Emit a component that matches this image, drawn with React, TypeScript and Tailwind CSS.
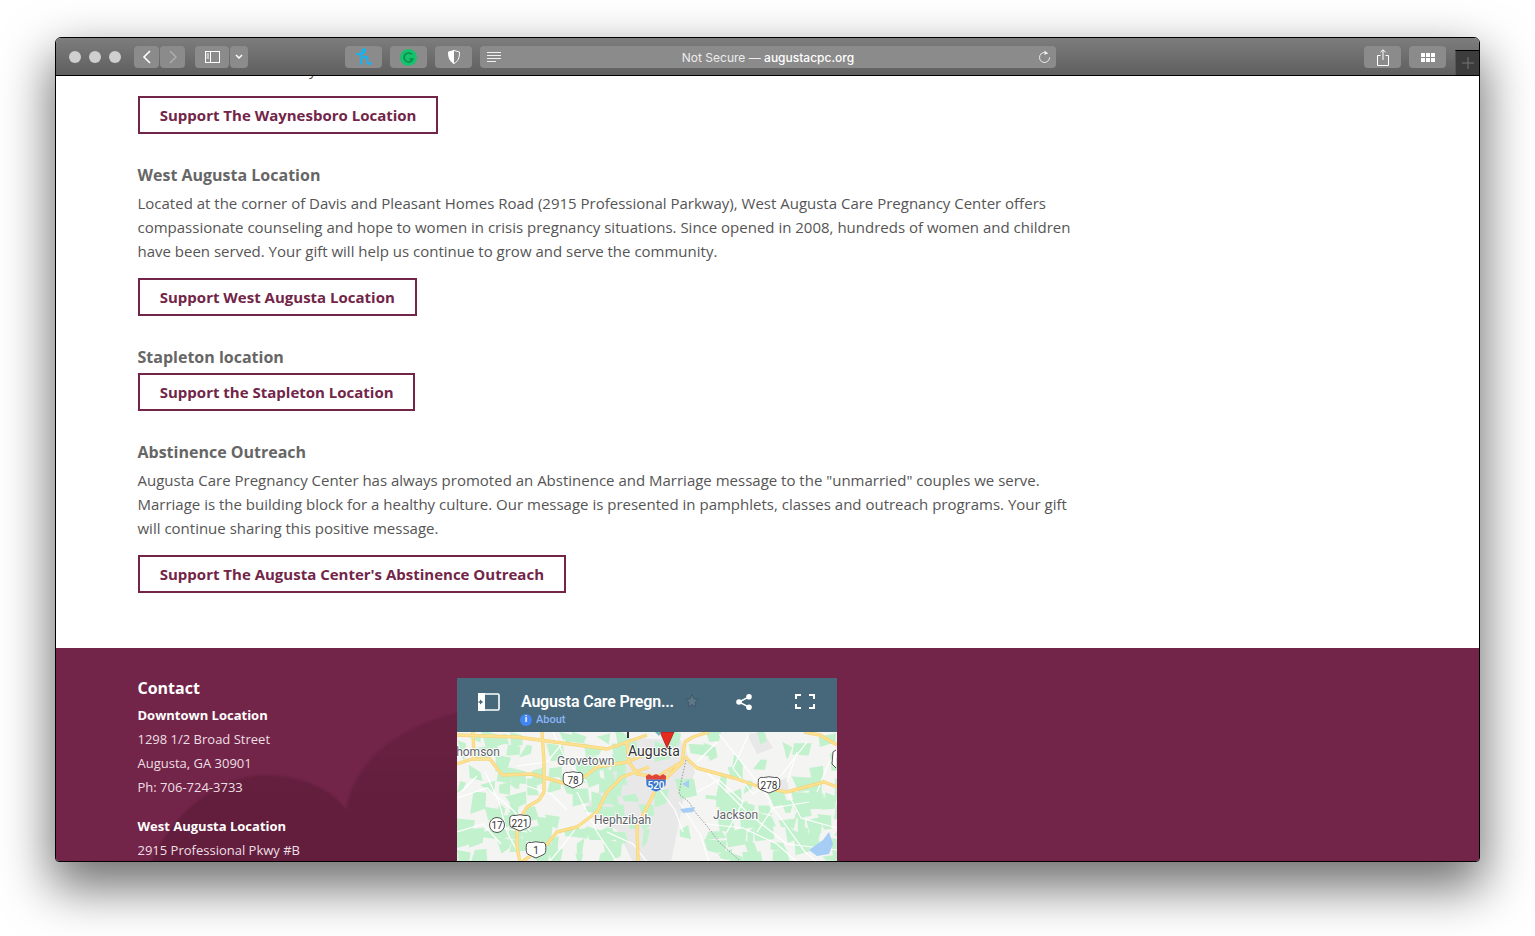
// terrain fragments for the map: fixed pseudo-random so every render is the same
function rnd(a: number, b: number) {
  const s = Math.sin(a * 12.9898 + b * 78.233) * 43758.5453;
  return s - Math.floor(s);
}

function isGreen(x: number, y: number) {
  const r = rnd(x, y);
  if (x > 165 && x < 235) return r > 0.8; // town, mostly grey
  if (x > 240 && y < 40) return r > 0.68; // upper right is paler
  return r > 0.44;
}

const GREEN: string[] = [];
for (let x = 0; x < 380; x += 13) {
  for (let y = 0; y < 130; y += 12) {
    if (!isGreen(x, y)) continue;
    const j = (k: number) => rnd(x + k, y - k) * 9;
    const w = 9 + j(1);
    const h = 8 + j(2);
    GREEN.push(`${x + j(3) - 4},${y + j(4) - 4} ${x + w},${y + j(5) - 4} ${x + w + j(6) - 4},${y + h} ${x + j(7) - 3},${y + h + j(8) - 3}`);
  }
}

const GREY = ["172,6 224,8 238,40 226,70 214,130 176,130 160,98 128,76 150,50", "290,2 306,0 316,16 300,22", "318,50 330,46 332,60 318,60"];

const WHITE_ROADS = [
  "M28 40 L42 70 L50 100 L66 130", "M0 66 L30 56 L56 78 L74 100", "M96 0 L110 30 L130 50", "M250 40 L292 82 L330 112 L380 118",
  "M222 70 L244 104 L252 130", "M292 2 L276 36 L296 62 L322 46 L350 10", "M262 2 L302 52 L314 70", "M312 70 L348 120 L360 130", "M200 54 L218 78 L226 100",
  "M122 92 L104 116 L92 130", "M70 54 L94 62 L110 78", "M250 92 L286 96 L320 112 L340 130", "M0 100 L26 92 L44 112", "M120 60 L140 100 L160 130",
  "M240 60 L262 48 L286 70 L270 100", "M330 60 L344 86 L380 96", "M340 20 L330 50", "M108 8 L90 30 L60 34", "M20 44 L4 60", "M150 100 L176 112 L190 130",
  "M260 10 L240 30", "M300 100 L316 76 L352 70", "M360 60 L372 30 L380 24", "M70 100 L44 96",
];

const MAJOR_ROADS = "M0 3 L60 5 L150 17 L170 10 L190 3 M85 0 L87 30 L87 60 L82 68 L70 75 L60 92 L60 115 L63 130 M0 32 L15 27 L33 27 L45 43 L75 42 L110 52 L127 45 L140 35 L170 30 L190 22 M65 130 L90 112 L100 100 L120 95 L140 80 L150 60 L165 45 L192 35 M181 130 L180 95 L190 75 L200 55 L226 30 M170 10 L172 30 L180 42 L200 45 L225 30 L228 10 L236 5 L252 0 M228 25 L240 36 L277 46 L303 55 L330 60 L367 50 L380 55 M347 0 L363 3 L380 13 M16 0 L17 26";

function US({ x, y, label, w = 19 }: { x: number; y: number; label: string; w?: number }) {
  const h = w / 2;
  return (
    <g transform={`translate(${x} ${y})`}>
      <path d={`M${-h} -6 Q${-h + 2} -8.5 ${-h / 2} -7.5 Q0 -9 ${h / 2} -7.5 Q${h - 2} -8.5 ${h} -6 Q${h + 1} 2 ${h - 1} 4 Q${h / 2} 6 0 8 Q${-h / 2} 6 ${-h + 1} 4 Q${-h - 1} 2 ${-h} -6 Z`} fill="#fff" stroke="#555" strokeWidth="1" />
      <text x="0" y="3.5" textAnchor="middle" fontSize="10" fill="#333" fontFamily="Roboto, sans-serif">{label}</text>
    </g>
  );
}

function MapArt() {
  return (
    <svg width="380" height="130" viewBox="0 0 380 130" className="block" fontFamily="Roboto, sans-serif">
      <rect width="380" height="130" fill="#f4f4f2" />
      {GREY.map((p) => <polygon key={p} points={p} fill="#e8e8e9" />)}
      {GREEN.map((p) => <polygon key={p} points={p} fill="#c2f1cd" />)}
      {WHITE_ROADS.map((d) => <path key={d} d={d} fill="none" stroke="#fff" strokeWidth="1.2" />)}
      <path d={MAJOR_ROADS} fill="none" stroke="#f6d67c" strokeWidth="3.4" strokeLinejoin="round" />
      <path d={MAJOR_ROADS} fill="none" stroke="#fde293" strokeWidth="1.8" strokeLinejoin="round" />
      <path d="M229 28 L224 50 L222 62 L232 70 L238 80 L250 94 L262 110 L282 128" fill="none" stroke="#9a9a9a" strokeWidth="1" strokeDasharray="1.5 1.5" />
      <path d="M225 52 L232 48 L232 56 Z M223 77 L238 75 L236 80 L226 81 Z" fill="#a6cdf5" />
      <path d="M352 118 L366 108 L372 100 L376 112 L372 122 L360 124 Z" fill="#a6cdf5" />
      <path d="M379 18 L376 20 L375 32 L379 36" fill="#fff" stroke="#555" strokeWidth="1" />
      <g fill="#5f6368" style={{ paintOrder: "stroke" }} stroke="#fff" strokeWidth="2" strokeLinejoin="round" fontSize="12">
        <text x="-8" y="24">Thomson</text>
        <text x="100" y="33">Grovetown</text>
        <text x="137" y="92">Hephzibah</text>
        <text x="256" y="87">Jackson</text>
        <text x="-6" y="128">n</text>
        <text x="171" y="24" fontSize="14" fill="#333">Augusta</text>
      </g>
      <US x={116} y={48} label="78" />
      <US x={312} y={53} label="278" w={21} />
      <US x={63} y={91} label="221" w={20} />
      <circle cx="40" cy="93" r="7.5" fill="#fff" stroke="#555" />
      <text x="40" y="96.5" textAnchor="middle" fontSize="10" fill="#333">17</text>
      <US x={79} y={118} label="1" />
      <path d="M189 47 H209 L209 53 Q206 58 199 60 Q192 58 189 53 Z" fill="#3a76c9" stroke="#fff" strokeWidth="0.6" />
      <path d="M189 44 L192 42 L195 44 L199 42 L203 44 L206 42 L209 44 V47.5 H189 Z" fill="#e0453a" />
      <text x="199" y="57" textAnchor="middle" fontSize="10" fill="#fff" fontWeight="500">520</text>
      <path d="M203 0 H217 L210 16 Z" fill="#e62b1e" stroke="#7a1a12" strokeWidth="0.6" />
      <rect x="170" y="0" width="2" height="6" fill="#333" />
      <path d="M198 0 L202 4 L204 0 Z" fill="#6bb6c2" />
    </svg>
  );
}

function HeaderIcons({ kind }: { kind: "panel" | "share" | "full" }) {
  if (kind === "panel") {
    return (
      <svg className="ml-px" width="22" height="18" viewBox="0 0 22 18">
        <rect x="1" y="1" width="20" height="16" fill="none" stroke="#fff" strokeWidth="1.6" rx="1" />
        <path d="M0 0 H7 V18 H0 Z" fill="#fff" />
        <path d="M2 6.5 L5 9 L2 11.5 Z M0.5 8.2 H3 V9.8 H0.5 Z" fill="#46687a" />
      </svg>
    );
  }
  if (kind === "share") {
    return (
      <svg width="16" height="16" viewBox="0 0 16 16" fill="#fff">
        <circle cx="13" cy="2.8" r="2.8" />
        <circle cx="3" cy="8" r="2.8" />
        <circle cx="13" cy="13.2" r="2.8" />
        <path d="M3 8 L13 2.8 M3 8 L13 13.2" stroke="#fff" strokeWidth="1.5" />
      </svg>
    );
  }
  return (
    <svg width="20" height="15" viewBox="0 0 20 15" fill="none" stroke="#fff" strokeWidth="2">
      <path d="M1 5 V1 H6 M14 1 H19 V5 M19 10 V14 H14 M6 14 H1 V10" />
    </svg>
  );
}

function ToolBtn({ className, children }: { className: string; children?: React.ReactNode }) {
  return <div className={`flex h-[22px] items-center justify-center rounded-[4px] bg-[#8b8b8b] ${className}`}>{children}</div>;
}

function Toolbar() {
  return (
    <div className="flex h-[38px] shrink-0 items-start border-b border-black bg-gradient-to-b from-[#7d7d7d] to-[#5f5f5f] pl-[13px] pt-[8px]">
      <div className="mt-[5px] flex gap-2">
        <div className="h-3 w-3 rounded-full bg-[#cfcfcf]" />
        <div className="h-3 w-3 rounded-full bg-[#cfcfcf]" />
        <div className="h-3 w-3 rounded-full bg-[#cfcfcf]" />
      </div>
      <ToolBtn className="ml-[13px] w-[25px]">
        <svg width="10" height="14" viewBox="0 0 10 14" fill="none" stroke="#fff" strokeWidth="1.6"><path d="M8 1 L2 7 L8 13" /></svg>
      </ToolBtn>
      <ToolBtn className="ml-px w-[25px]">
        <svg width="10" height="14" viewBox="0 0 10 14" fill="none" stroke="#b0b0b0" strokeWidth="1.4"><path d="M2 1 L8 7 L2 13" /></svg>
      </ToolBtn>
      <ToolBtn className="ml-[10px] w-[34px]">
        <svg width="15" height="12" viewBox="0 0 15 12" fill="none" stroke="#fff" strokeWidth="1"><rect x="0.5" y="0.5" width="14" height="11" /><path d="M5.5 0.5 V11.5 M1.5 3 H4 M1.5 5 H4 M1.5 7 H4" /></svg>
      </ToolBtn>
      <ToolBtn className="ml-px w-[18px]">
        <svg width="8" height="6" viewBox="0 0 8 6" fill="none" stroke="#fff" strokeWidth="1.5"><path d="M1 1 L4 4 L7 1" /></svg>
      </ToolBtn>
      <ToolBtn className="ml-[97px] w-[37px]">
        <svg width="16" height="18" viewBox="0 0 16 18" fill="none" stroke="#12b4f2" strokeWidth="2" strokeLinecap="round"><path d="M1 6 C4 7 9 5 9 2.5 C9 0.5 6.5 0.5 6 3.5 L5 16 M5.5 11 C7.5 8 11.5 8 11.5 11 L11.5 14 C11.5 16 13.5 16.5 15 15" /></svg>
      </ToolBtn>
      <ToolBtn className="ml-2 w-[37px]">
        <svg width="17" height="17" viewBox="0 0 17 17"><circle cx="8.5" cy="8.5" r="8.5" fill="#15c26b" /><path d="M12 5.5 A4.5 4.5 0 1 0 12.8 10 H9.5" fill="none" stroke="#0a8a4b" strokeWidth="1.6" /></svg>
      </ToolBtn>
      <ToolBtn className="ml-2 w-[37px]">
        <svg width="12" height="14" viewBox="0 0 12 14"><path d="M6 0.5 L11.5 2 C11.5 8 10 11.5 6 13.5 C2 11.5 0.5 8 0.5 2 Z" fill="none" stroke="#fff" /><path d="M6 0.5 L0.5 2 C0.5 8 2 11.5 6 13.5 Z" fill="#fff" /></svg>
      </ToolBtn>
      <div className="relative ml-2 flex h-[22px] w-[576px] items-center justify-center rounded-[4px] bg-[#8b8b8b] pt-px font-['Inter',sans-serif] text-[12px] text-[#ececec]">
        <svg className="absolute left-[7px] top-[6px]" width="15" height="11" viewBox="0 0 15 11" stroke="#f0f0f0" strokeWidth="1"><path d="M0 0.5 H14 M0 3.5 H14 M0 6.5 H14 M0 9.5 H9" /></svg>
        <span>Not Secure — <span className="font-medium text-white">augustacpc.org</span></span>
        <svg className="absolute right-[5px] top-[4px]" width="13" height="14" viewBox="0 0 13 14" fill="none" stroke="#eee" strokeWidth="1"><path d="M9.5 3.5 A5 5 0 1 0 11.5 7.5" /><path d="M6.5 0.5 L10 3.3 L6.5 5 Z" fill="#eee" stroke="none" /></svg>
      </div>
      <ToolBtn className="ml-[308px] w-[37px]">
        <svg width="12" height="17" viewBox="0 0 12 17" fill="none" stroke="#fff" strokeWidth="1"><path d="M3.5 6.5 H0.5 V16.5 H11.5 V6.5 H8.5 M6 11 V1 M3.5 3.2 L6 0.8 L8.5 3.2" /></svg>
      </ToolBtn>
      <ToolBtn className="ml-2 w-[37px]">
        <div className="grid grid-cols-3 gap-px">
          {[0, 1, 2, 3, 4, 5].map((i) => <div key={i} className="h-1 w-1 bg-white" />)}
        </div>
      </ToolBtn>
      <div className="ml-[9px] mt-[4px] flex h-[25px] w-[24px] items-center justify-center border-l border-t border-l-[#555] border-t-black bg-[#3c3c3c]">
        <svg width="12" height="12" viewBox="0 0 12 12" stroke="#777" strokeWidth="1"><path d="M6 0 V12 M0 6 H12" /></svg>
      </div>
    </div>
  );
}

function SupportButton({ label }: { label: string }) {
  return (
    <a className="inline-flex h-[38px] items-center border-2 border-[#722548] px-[19.75px] text-[15px] font-bold text-[#722548]">{label}</a>
  );
}

function Heading({ label }: { label: string }) {
  return <h3 className="-ml-[0.5px] h-6 text-[16px] font-bold leading-6 text-[#666]">{label}</h3>;
}

function Para({ children }: { children: React.ReactNode }) {
  return <p className="-ml-[0.5px] mt-1 w-[940px] text-[15px] leading-6 text-[#555]">{children}</p>;
}

function Footer() {
  return (
    <footer className="relative flex flex-1 bg-[#722548] pl-[82px] pt-[30px] text-[13px] text-[#eedfe5]">
      <svg className="absolute left-0 top-0 blur-[1px]" width="520" height="214" viewBox="0 0 520 214">
        <defs>
          <linearGradient id="heart" x1="0" y1="0.3" x2="0" y2="0.7">
            <stop offset="0" stopColor="#672040" />
            <stop offset="1" stopColor="#621e3c" />
          </linearGradient>
        </defs>
        <path d="M95 214 C120 160 165 127 209 127 C250 127 280 145 290 162 C295 130 320 85 401 65 L500 60 V214 Z" fill="url(#heart)" />
      </svg>
      <div className="relative -ml-[0.5px] w-[319.5px]">
        <h3 className="mb-[5px] text-[16px] font-bold leading-5 text-white">Contact</h3>
        <p className="font-bold leading-6 text-white">Downtown Location</p>
        <p className="leading-6">1298 1/2 Broad Street</p>
        <p className="leading-6">Augusta, GA 30901</p>
        <p className="leading-6">Ph: 706-724-3733</p>
        <p className="mt-[15px] font-bold leading-6 text-white">West Augusta Location</p>
        <p className="leading-6">2915 Professional Pkwy #B</p>
      </div>
      <div className="relative w-[380px] font-['Roboto',sans-serif]">
        <div className="flex h-[54px] bg-[#46687a] pl-5 text-white">
          <div className="mt-[15px]"><HeaderIcons kind="panel" /></div>
          <div className="ml-[21px] mt-[14px] w-[155px]">
            <div className="text-[16px] font-semibold leading-5 tracking-[-0.2px] whitespace-nowrap">Augusta Care Pregn...</div>
            <div className="-ml-px flex items-center gap-[4px] text-[11px] font-medium leading-[15px] text-[#8ab4f8]">
              <span className="flex h-3 w-3 items-center justify-center rounded-full bg-[#4285f4] text-[9px] font-bold leading-none text-white">i</span>
              About
            </div>
          </div>
          <svg className="ml-[9px] mt-[16px]" width="14" height="14" viewBox="0 0 14 14"><path d="M7 0.5 L9 5 L13.5 5.4 L10 8.4 L11 13 L7 10.6 L3 13 L4 8.4 L0.5 5.4 L5 5 Z" fill="#5f7888" stroke="#3a5263" strokeWidth="0.7" /></svg>
          <div className="ml-[37px] mt-[16px]"><HeaderIcons kind="share" /></div>
          <div className="ml-[43px] mt-[16px]"><HeaderIcons kind="full" /></div>
        </div>
        <MapArt />
      </div>
    </footer>
  );
}

export default function App() {
  return (
    <div className="h-[936px] w-[1535px] overflow-hidden bg-white pl-[55px] pt-[37px] font-['Open_Sans',sans-serif]">
      <div className="flex h-[825px] w-[1425px] flex-col overflow-hidden rounded-t-[6px] rounded-b-[4px] border border-black bg-white shadow-[0_22px_50px_4px_rgba(0,0,0,0.56)]">
        <Toolbar />
        <main className="flex flex-1 flex-col overflow-hidden">
          <div className="h-[572px] shrink-0 overflow-hidden px-[82px]">
            <p className="-mt-[19px] pl-[171px] text-[15px] leading-6 text-[#555]">y</p>
            <div className="mt-[15px]"><SupportButton label="Support The Waynesboro Location" /></div>
            <div className="mt-[29px]">
              <Heading label="West Augusta Location" />
              <Para>
                Located at the corner of Davis and Pleasant Homes Road (2915 Professional Parkway), West Augusta Care Pregnancy Center offers compassionate counseling and hope to women in crisis pregnancy situations. Since opened in 2008, hundreds of women and children have been served. Your gift will help us continue to grow and serve the community.
              </Para>
              <div className="mt-[15px]"><SupportButton label="Support West Augusta Location" /></div>
            </div>
            <div className="mt-[29px]">
              <Heading label="Stapleton location" />
              <div className="mt-1"><SupportButton label="Support the Stapleton Location" /></div>
            </div>
            <div className="mt-[29px]">
              <Heading label="Abstinence Outreach" />
              <Para>
                Augusta Care Pregnancy Center has always promoted an Abstinence and Marriage message to the "unmarried" couples we serve. Marriage is the building block for a healthy culture. Our message is presented in pamphlets, classes and outreach programs. Your gift will continue sharing this positive message.
              </Para>
              <div className="mt-[15px]"><SupportButton label="Support The Augusta Center's Abstinence Outreach" /></div>
            </div>
          </div>
          <Footer />
        </main>
      </div>
    </div>
  );
}
